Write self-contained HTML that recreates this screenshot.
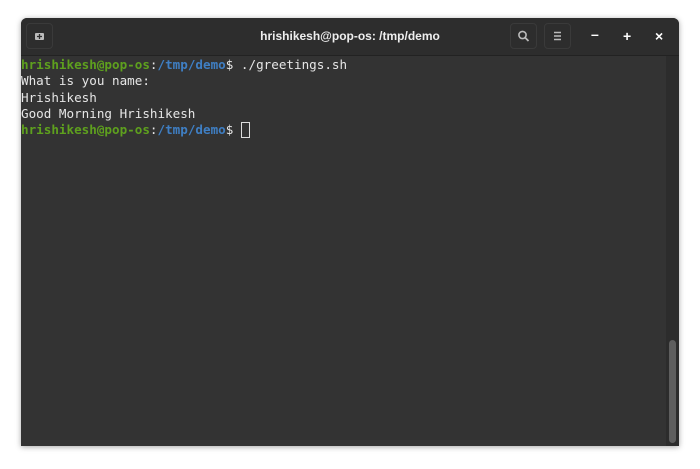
<!DOCTYPE html>
<html><head><style>
body{margin:0;width:700px;height:469px;background:#fff;position:relative;overflow:hidden;font-family:"Liberation Sans",sans-serif}
.win{position:absolute;left:21px;top:18px;width:658px;height:428px;background:#333;border-radius:6px 6px 0 0;box-shadow:0 1px 6px rgba(0,0,0,.35);overflow:hidden}
.hdr{position:absolute;left:0;top:0;width:658px;height:37px;background:#2d2d2d;border-bottom:1px solid #222}
.btn{position:absolute;top:5px;width:27px;height:26px;border:1px solid #3a3a3a;border-radius:4px;box-sizing:border-box}
.title{position:absolute;left:0;right:0;top:11px;text-align:center;color:#eee;font-weight:bold;font-size:12px}
.term{position:absolute;left:0;top:39px;font-family:"DejaVu Sans Mono","Liberation Mono",monospace;font-size:12.6px;line-height:16.3px;color:#e6e6e6;white-space:pre}
.g{color:#5ea01e;font-weight:bold}.b{color:#3f7fc4;font-weight:bold}
.cur{display:inline-block;width:9px;height:16px;border:1px solid #ddd;vertical-align:-4px;box-sizing:border-box}
.trough{position:absolute;right:0;top:38px;width:13px;bottom:0;background:#2c2c2c}
.thumb{position:absolute;left:648px;top:322px;width:7px;height:103px;background:#5e5e5e;border-radius:4px}
.wc{position:absolute;top:10px;color:#fff;font-weight:bold;font-size:14px}
</style></head><body>
<div class="win">
<div class="hdr">
<div class="btn" style="left:5px"><svg width="25" height="24" viewBox="0 0 25 24"><rect x="8" y="9" width="9" height="7" rx="1" fill="#bbb"/><path d="M12.5 10v5M10 12.5h5" stroke="#2d2d2d" stroke-width="1.3"/></svg></div>
<div class="title">hrishikesh@pop-os: /tmp/demo</div>
<div class="btn" style="left:489px"><svg width="25" height="24" viewBox="0 0 25 24"><circle cx="11.5" cy="11" r="3.6" fill="none" stroke="#bbb" stroke-width="1.6"/><path d="M14 13.5l3.5 3.5" stroke="#bbb" stroke-width="1.8"/></svg></div>
<div class="btn" style="left:523px"><svg width="25" height="24" viewBox="0 0 25 24"><path d="M9 8.5h7M9 12h7M9 15.5h7" stroke="#bbb" stroke-width="1.4"/></svg></div>
<div class="wc" style="left:570px;top:8px">–</div>
<div class="wc" style="left:602px">+</div>
<div class="wc" style="left:634px">×</div>
</div>
<div class="term"><span class="g">hrishikesh@pop-os</span>:<span class="b">/tmp/demo</span>$ ./greetings.sh
What is you name:
Hrishikesh
Good Morning Hrishikesh
<span class="g">hrishikesh@pop-os</span>:<span class="b">/tmp/demo</span>$ <span class="cur"></span></div>
<div class="trough"></div>
<div class="thumb"></div>
</div>
</body></html>
